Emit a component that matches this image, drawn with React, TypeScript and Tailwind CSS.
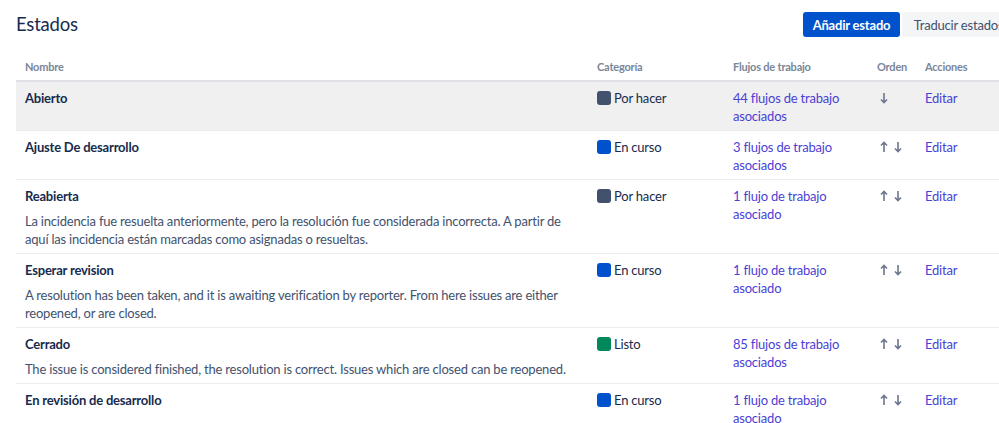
import React from "react";

type Status = {
  name: string;
  description?: string;
  category: "todo" | "progress" | "done";
  flows: string[];
  up: boolean;
  down: boolean;
  highlighted?: boolean;
};

const categories = {
  todo: { label: "Por hacer", color: "bg-[#42526E]" },
  progress: { label: "En curso", color: "bg-[#0052CC]" },
  done: { label: "Listo", color: "bg-[#00875A]" },
};

const statuses: Status[] = [
  {
    name: "Abierto",
    category: "todo",
    flows: ["44 flujos de trabajo", "asociados"],
    up: false,
    down: true,
    highlighted: true,
  },
  {
    name: "Ajuste De desarrollo",
    category: "progress",
    flows: ["3 flujos de trabajo", "asociados"],
    up: true,
    down: true,
  },
  {
    name: "Reabierta",
    description:
      "La incidencia fue resuelta anteriormente, pero la resolución fue considerada incorrecta. A partir de aquí las incidencia están marcadas como asignadas o resueltas.",
    category: "todo",
    flows: ["1 flujo de trabajo", "asociado"],
    up: true,
    down: true,
  },
  {
    name: "Esperar revision",
    description:
      "A resolution has been taken, and it is awaiting verification by reporter. From here issues are either reopened, or are closed.",
    category: "progress",
    flows: ["1 flujo de trabajo", "asociado"],
    up: true,
    down: true,
  },
  {
    name: "Cerrado",
    description:
      "The issue is considered finished, the resolution is correct. Issues which are closed can be reopened.",
    category: "done",
    flows: ["85 flujos de trabajo", "asociados"],
    up: true,
    down: true,
  },
  {
    name: "En revisión de desarrollo",
    category: "progress",
    flows: ["1 flujo de trabajo", "asociado"],
    up: true,
    down: true,
  },
];

function ArrowIcon({ dir }: { dir: "up" | "down" }) {
  return (
    <svg width="8" height="12" viewBox="0 0 8 12" className="text-[#6B778C]">
      {dir === "up" ? (
        <path d="M4 11V1.5M1 4.5L4 1.5L7 4.5" stroke="currentColor" strokeWidth="1.6" fill="none" />
      ) : (
        <path d="M4 1v9.5M1 7.5L4 10.5L7 7.5" stroke="currentColor" strokeWidth="1.6" fill="none" />
      )}
    </svg>
  );
}

const cols = "grid grid-cols-[571px_136px_144px_48px_1fr]";

export default function App() {
  return (
    <div className="w-[999px] h-[423px] overflow-hidden bg-white font-['Lato','Noto_Sans',sans-serif] text-[13px] tracking-[-0.2px] leading-[18px] text-[#172B4D]">
      <div className="w-[1031px] px-4 pt-3">
        {/* Page header */}
        <div className="flex items-center justify-between">
          <h1 className="text-[18.5px] leading-[25px] font-normal text-[#172B4D]">Estados</h1>
          <div className="flex gap-[2px]">
            <button className="h-[25px] w-[97px] rounded-[3px] bg-[#0052CC] text-white font-bold">
              Añadir estado
            </button>
            <button className="h-[25px] w-[113px] rounded-[3px] bg-[#F4F5F7] text-[#42526E]">
              Traducir estados
            </button>
          </div>
        </div>

        {/* Table */}
        <div className="mt-[15px]">
          <div className={`${cols} pt-[6px] pb-[4px] border-b-2 border-[#DFE1E6] text-[11px] tracking-[-0.2px] font-bold text-[#7A869A]`}>
            <div className="px-[9px]">Nombre</div>
            <div className="px-[10px]">Categoría</div>
            <div className="px-[10px]">Flujos de trabajo</div>
            <div className="px-[10px]">Orden</div>
            <div className="px-[10px]">Acciones</div>
          </div>

          {statuses.map((s) => (
            <div
              key={s.name}
              className={`${cols} pt-[7px] pb-[5px] border-b border-[#EBECF0] ${s.highlighted ? "bg-[#F0F0F0]" : ""}`}
            >
              <div className="px-[9px]">
                <div className="font-bold text-[#172B4D]">{s.name}</div>
                {s.description && (
                  <p className="mt-[7px] text-[#42526E]">{s.description}</p>
                )}
              </div>
              <div className="px-[10px] flex items-start gap-[3px]">
                <span className={`mt-[2px] w-[14px] h-[14px] rounded-[3px] ${categories[s.category].color}`} />
                <span className="text-[#172B4D]">{categories[s.category].label}</span>
              </div>
              <div className="px-[10px] text-[#4B3FD4]">
                {s.flows.map((l) => (
                  <div key={l}>{l}</div>
                ))}
              </div>
              <div className="pl-[13px] flex items-start gap-[6px] pt-[3px]">
                {s.up && <ArrowIcon dir="up" />}
                {s.down && <ArrowIcon dir="down" />}
              </div>
              <div className="px-[10px] text-[#4B3FD4]">Editar</div>
            </div>
          ))}
        </div>
      </div>
    </div>
  );
}
